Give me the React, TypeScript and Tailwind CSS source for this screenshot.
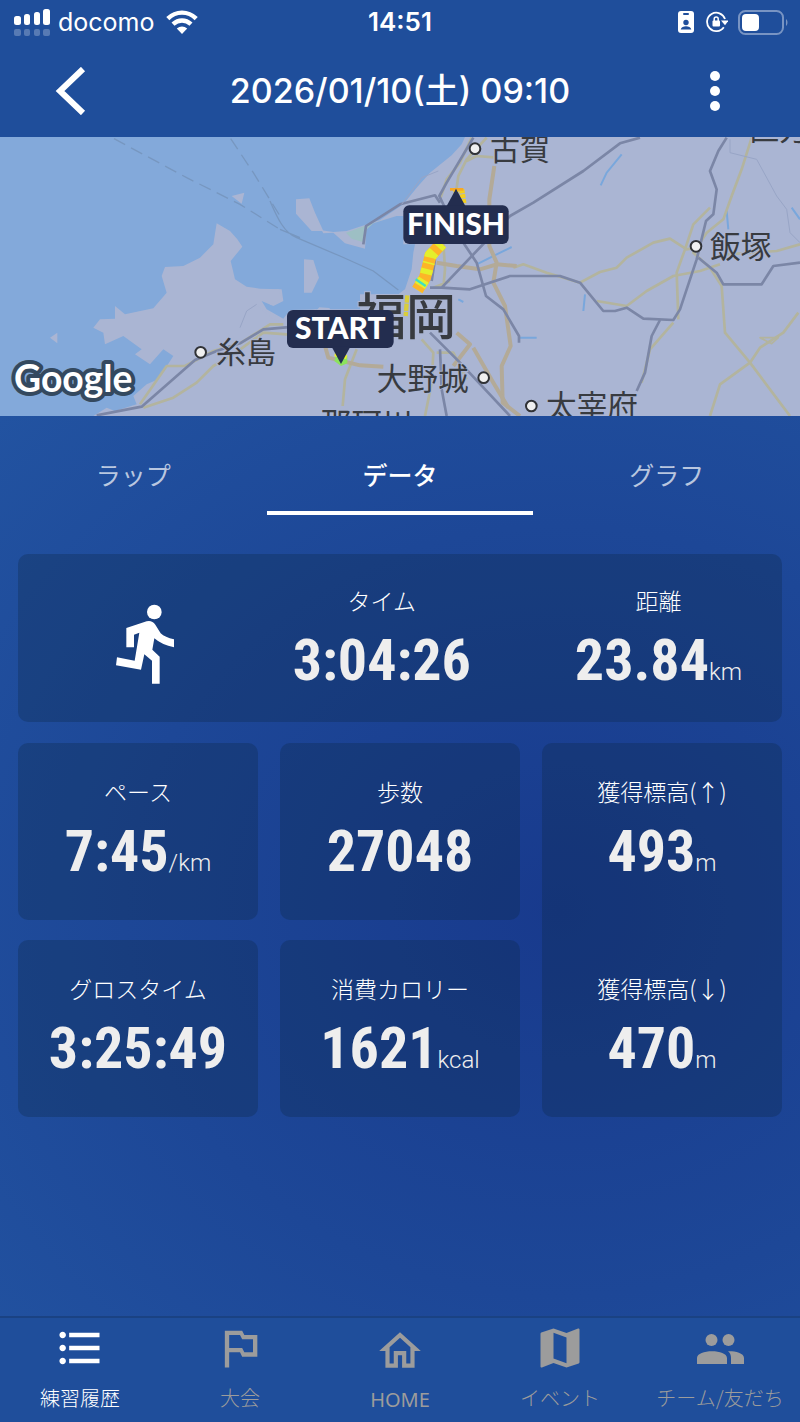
import React, { useState } from 'react';
import { MdFormatListBulleted, MdMap, MdOutlinedFlag, MdOutlineHome } from 'react-icons/md';

const PeopleIcon: React.FC = () => (
  <svg className="w-[52px] h-[52px]" viewBox="0 0 52 52" fill="currentColor">
    <circle cx="17.500" cy="18" r="6" />
    <circle cx="34.500" cy="18" r="6" />
    <path d="M3 42v-6c0-9 30-9 30 0v6zM37 42v-6c0-3-1-5-3-6.700 6-.3 16 1.400 16 6.700v6z" />
  </svg>
);

const TABS = ['ラップ', 'データ', 'グラフ'];

const NAV_ITEMS = [
  { name: '練習履歴', icon: <MdFormatListBulleted size={52} /> },
  { name: '大会', icon: <MdOutlinedFlag size={52} /> },
  { name: 'HOME', icon: <MdOutlineHome size={50} />, home: true },
  { name: 'イベント', icon: <MdMap size={52} /> },
  { name: 'チーム/友だち', icon: <PeopleIcon /> },
];

const StatusBar: React.FC = () => (
  <div className="grid grid-cols-3 items-center h-11 pl-3 pr-3 font-['Inter',sans-serif] leading-8">
    <div className="flex items-center gap-2">
      <svg className="w-[38px] h-7" viewBox="0 0 38 28" fill="currentColor">
        <rect x="2" y="8" width="7" height="9" rx="2.500" />
        <rect x="12" y="6" width="6" height="11" rx="2.500" />
        <rect x="22" y="4" width="6" height="13" rx="2.500" />
        <rect x="31" y="1" width="7" height="16" rx="2.500" />
        <g opacity=".25">
          <rect x="2" y="21" width="7" height="7" rx="2" />
          <rect x="12" y="21" width="6" height="7" rx="2" />
          <rect x="22" y="21" width="6" height="7" rx="2" />
          <rect x="31" y="21" width="7" height="7" rx="2" />
        </g>
      </svg>
      <span className="text-[25px]">docomo</span>
      <svg className="w-8 h-6 ml-1" viewBox="0 0 32 24" fill="none" stroke="currentColor" strokeWidth="4.400">
        <path d="M1.800 8.600C10 .6 22 .6 30.200 8.600" />
        <path d="M7 14.200c5.400-5 12.600-5 18 0" />
        <path d="M16 24l-5.200-5.400c3-2.700 7.400-2.700 10.400 0z" fill="currentColor" stroke="none" />
      </svg>
    </div>
    <time className="text-center text-[26px] font-semibold">14:51</time>
    <div className="flex items-center justify-end gap-3">
      <svg className="w-4 h-[22px]" viewBox="0 0 16 22">
        <rect width="16" height="22" rx="3" fill="#fff" />
        <g fill="#1f4e9b">
          <rect x="5" y="2" width="6" height="2" rx="1" />
          <circle cx="8" cy="11.500" r="2.700" />
          <path d="M2.700 18.500c1-4.200 9.600-4.200 10.600 0z" />
        </g>
      </svg>
      <svg className="w-[22px] h-[22px]" viewBox="0 0 22 22" fill="none" stroke="currentColor" strokeWidth="1.800">
        <path d="M17.800 16.200A9.200 9.200 0 1 1 19 8" />
        <path d="M15 9.500h7.500L19 14.200z" fill="currentColor" stroke="none" />
        <rect x="6.500" y="9.500" width="7.500" height="6" rx="1" fill="currentColor" stroke="none" />
        <path d="M8.200 10V8a2 2 0 0 1 4 0v2" strokeWidth="1.500" />
      </svg>
      <svg className="w-[52px] h-[26px] -ml-1" viewBox="0 0 52 26" fill="none">
        <rect x="3" y="2" width="44" height="23" rx="6.500" stroke="#fff" strokeOpacity=".4" strokeWidth="2" />
        <rect x="6" y="5" width="17" height="17" rx="4" fill="#fff" />
        <path d="M50 10c2 1.500 2 5.500 0 7z" fill="#fff" fillOpacity=".4" />
      </svg>
    </div>
  </div>
);

const Header: React.FC = () => (
  <header className="bg-[#1f4e9b] h-[137px]">
    <StatusBar />
    <div className="flex items-center justify-between px-[50px] h-[93px]">
      <button aria-label="戻る" className="w-[70px] h-12 flex items-center">
        <svg className="w-10 h-12" viewBox="0 0 40 48" fill="none" stroke="currentColor" strokeWidth="6">
          <path d="M33 2L10 24l23 22" />
        </svg>
      </button>
      <h1 className="text-[34px] leading-[44px] font-medium font-['Inter','Noto_Sans_CJK_JP',sans-serif]">2026/01/10(土) 09:10</h1>
      <button aria-label="メニュー" className="w-[70px] h-12 flex items-center justify-center">
        <svg className="w-3 h-10" viewBox="0 0 12 40" fill="currentColor">
          <circle cx="6" cy="5" r="5" />
          <circle cx="6" cy="20" r="5" />
          <circle cx="6" cy="35" r="5" />
        </svg>
      </button>
    </div>
  </header>
);

const RouteMap: React.FC = () => (
  <svg className="block w-full" viewBox="0 3 2400 837" role="img" aria-label="ルート">
    <rect y="3" width="2400" height="837" fill="#aab5d3" />
    <path
      fill="#83a9da"
      d="M0 3H1395L1385 25 1355 58 1290 110 1250 155 1210 205 1140 252 1040 285 1000 288 965 283 970 292 1000 290 1035 322 1095 338 1100 268 1190 240 1210 240V325H1245L1240 350 1235 400 1215 460 1195 475H1080V520L960 520 870 522 850 548 800 520 785 495 820 510 850 495 845 460 780 458 740 452 705 430 692 375 727 332 712 310 690 285 650 262 640 325 600 365 550 390 495 393 485 420 500 470 460 517 375 535 345 510 345 548 300 550 280 575 310 590 315 625 370 600 425 640 405 655 450 685 490 640 520 660 475 730 440 745 400 780 410 805 345 825 320 815 280 840H0z"
    />
    <g fill="#aab5d3">
      <path d="M695 180l38-10-8 33zM150 605l22-15v32zM888 190l40-3 17 43 25 55h-35l-47-52zM912 370l28 2 17 53-22 45h-23zM950 522l8-8 30 2 5 8zM810 462l25-2 10 25-35 22zM770 510l50 40 60 20 70-50-60 10-40 22z" />
    </g>
    <path d="M1038 290L1100 268 1195 236 1120 262 1095 285 1088 318 1055 308z" fill="#9dbfc4" />

    {/* ferry lines */}
    <g fill="none" stroke="#7797c0" strokeWidth="4" strokeDasharray="38 20">
      <path d="M342 8L560 125 720 205 840 280M692 8L760 110 840 240" />
    </g>
    <path d="M810 195C830 240 850 290 890 305L1020 360 1120 405 1195 462M840 280L900 305" fill="none" stroke="#7797c0" strokeWidth="4" />

    {/* rivers */}
    <g fill="none" stroke="#79a7dc" strokeWidth="6">
      <path d="M1865 55L1820 110 1802 148M1755 475l-5 50M2180 225l5 55M2375 215l25 35M1430 385l60-30 45-22M1560 605h50M1375 490l15 8" />
    </g>

    {/* minor roads */}
    <g fill="none" stroke="#b3b49e" strokeWidth="8" strokeLinejoin="round">
      <path d="M420 805L500 690H555L640 645 720 622 810 565H850M430 815L520 785 590 740 640 690 700 655 790 590 860 595 960 590" />
      <path d="M1415 5L1380 80 1340 130 1322 185M1460 5L1400 70 1375 120 1365 190" />
      <path d="M1400 75L1430 60 1490 65M1330 320L1335 400 1330 455M1300 455L1350 435M1540 395L1570 385 1640 410 1740 440 1800 408 1850 395 1880 365 1960 320 2010 308 2060 340 2090 335" />
      <path d="M2255 5L2225 100 2195 180 2170 250 2120 290 2080 350 2130 395 2165 450 2175 590 2250 680 2370 840M2130 215L2080 265 2055 340 2030 410 2035 550" />
      <path d="M1790 495L1880 510 1940 465 2020 420 2100 405 2160 385M2020 560L1950 640 1925 740M2180 355L2330 345 2400 325M2395 530L2350 590 2280 635 2250 680 2160 745 2130 840" />
      <path d="M2280 605h55l-20 18z" strokeWidth="5" />
      <path d="M1070 640L1035 730 1028 810M1265 610L1300 650 1295 740 1275 840M1310 650L1360 650 1400 730" />
    </g>

    {/* expressways */}
    <g fill="none" stroke="#b3aa98" strokeWidth="12" strokeLinejoin="round">
      <path d="M1483 90L1468 190 1468 330 1490 380 1480 440 1515 510 1532 630 1505 690 1508 800 1560 840M1310 380L1370 390 1440 400 1490 385 1550 390" />
      <path d="M975 630L985 665 1080 688 1150 692M1370 590L1410 625 1360 690M1420 635L1480 740 1525 815" />
    </g>

    {/* railways */}
    <g fill="none" stroke="#7b86a6" strokeWidth="8" strokeLinejoin="round">
      <path d="M290 838L425 812 585 672 650 645 720 622 790 580 960 565" />
      <path d="M1420 5L1340 140 1318 180 1370 290 1430 380 1458 480 1510 520 1557 600V620" />
      <path d="M1090 325L1098 270 1200 205 1305 178 1320 200" />
      <path d="M1290 455H1325L1530 240 1600 200 1750 105 1860 22 1920 5M1295 435L1305 370M1325 455L1410 460 1530 420H1680L1740 440 1810 525H1845L1880 515 1930 548 2020 552 2040 520 2090 370 2118 255 2140 235 2150 160 2130 105 2155 45 2180 5" />
      <path d="M2095 365L2150 410 2170 445H2285L2320 390 2400 380M1980 552L1955 600 1935 710 1910 765" />
      <path d="M1290 590L1380 680 1530 840M1320 640L1325 760 1340 840" />
    </g>
    <path d="M2190 10v40l80 20 60 110 30 40 10 70 30 30M720 575l20-50 30-20M1205 205l60-80 50-20" fill="none" stroke="#98a5c6" strokeWidth="3" />

    <g className="font-['Noto_Sans_CJK_JP',sans-serif]" fill="#383b40" stroke="#aab5d3" strokeWidth="6" paintOrder="stroke" fontSize="90">
      <text x="1470" y="71">古賀</text>
      <text x="648" y="682">糸島</text>
      <text x="1130" y="761" fontSize="92">大野城</text>
      <text x="1638" y="842" fontSize="92">太宰府</text>
      <text x="2130" y="367" fontSize="92">飯塚</text>
      <text x="2246" y="12" fontSize="92">直方</text>
      <text x="962" y="897" fontSize="92">那珂川</text>
      <text x="1068" y="596" fontSize="150" fontWeight="500">福岡</text>
    </g>
    <g fill="#f0f0f0" stroke="#303236" strokeWidth="6">
      <circle cx="602" cy="649" r="16" />
      <circle cx="1425" cy="38" r="16" />
      <circle cx="1451" cy="725" r="16" />
      <circle cx="1594" cy="810" r="16" />
      <circle cx="2088" cy="331" r="16" />
    </g>

    {/* run track, coloured by pace */}
    <g fill="none" strokeLinejoin="round">
      <path d="M1325 322L1292 358 1275 425 1252 462" stroke="#fdb528" strokeWidth="36" />
      <path d="M1325 322L1292 358 1275 425 1252 462" stroke="#e4f02c" strokeWidth="36" strokeDasharray="16 18 22 14 5 16" />
      <path d="M1247 430l30 20" stroke="#3fe0c0" strokeWidth="7" />
      <path d="M1222 478L1217 540" stroke="#d9cd3c" strokeWidth="13" strokeDasharray="22 3" />
      <path d="M1368 157V200M1385 160L1392 205" stroke="#f3cf20" strokeWidth="16" strokeDasharray="12 3" />
      <path d="M1350 160h40" stroke="#f7a824" strokeWidth="8" />
      <path d="M1003 675L1014 638 1042 660V682L1023 690z" fill="#8be35c" />
      <path d="M1004 655l36 8" stroke="#eef02a" strokeWidth="12" />
    </g>

    <g fill="#232d4f">
      <path d="M1368 158l28 52h-56z" />
      <rect x="1210" y="208" width="316" height="116" rx="18" />
      <rect x="861" y="522" width="320" height="114" rx="18" />
      <path d="M1023 684l-28-52h56z" />
    </g>
    <g className="font-['Lato',sans-serif]" fill="#fff" fontSize="90" fontWeight="900" textAnchor="middle">
      <text x="1368" y="296">FINISH</text>
      <text x="1021" y="610">START</text>
    </g>
    <text className="font-['Lato',sans-serif]" x="42" y="768" fontSize="112" fontWeight="700" fill="#fff" stroke="#34495f" strokeWidth="24" strokeLinejoin="round" paintOrder="stroke">Google</text>
  </svg>
);

const RunnerIcon: React.FC = () => (
  <svg className="w-[58px] h-20" viewBox="348 194 174 238" fill="currentColor">
    <circle cx="463" cy="217" r="22" />
    <path d="M379 265L440 245Q456 241 466 255L482 281Q495 293 522 299V323Q486 316 463 296L457 330 479 351V432H456V363L433 344 423 390 348 377 351 353 404 363 418 279 402 285V323H379z" />
  </svg>
);

interface MetricProps {
  label: string;
  value: string;
  unit?: string;
}

const Metric: React.FC<MetricProps> = ({ label, value, unit }) => (
  <dl className="flex flex-col items-center">
    <dt className="text-[23px] leading-8 font-light font-['Noto_Sans_CJK_JP',sans-serif]">{label}</dt>
    <dd className="mt-3 text-[#eeeeee] whitespace-nowrap">
      <span className="text-[58px] leading-[64px] font-bold font-['Roboto_Condensed','Roboto',sans-serif]">{value}</span>
      {unit && <span className="text-2xl font-light font-['Roboto',sans-serif]">{unit}</span>}
    </dd>
  </dl>
);

const CARD = 'rounded-[10px] bg-[#0e2746]/30';

const App: React.FC = () => {
  const [tab, setTab] = useState('データ');
  const [page, setPage] = useState('練習履歴');

  return (
    <div className="min-h-screen flex flex-col text-white bg-[#2152a0]">
      <Header />
      <RouteMap />
      <main className="flex-1 bg-[radial-gradient(ellipse_at_70%_55%,#183a8d_0%,#1d4797_55%,#2253a1_100%)]">
        <div role="tablist" className="grid grid-cols-3 font-['Noto_Sans_CJK_JP',sans-serif]">
          {TABS.map((name) => (
            <button key={name} role="tab" aria-selected={tab === name} onClick={() => setTab(name)} className={`h-[99px] pt-10 text-[25px] leading-9 border-b-4 flex items-start justify-center ${tab === name ? 'border-white font-medium' : 'border-transparent text-white/70'}`}>
              {name}
            </button>
          ))}
        </div>

        <div className="px-[18px] pt-[39px] pb-10">
          <section className={`${CARD} flex h-[168px]`}>
            <div className="w-1/3 flex items-center justify-center pt-3">
              <RunnerIcon />
            </div>
            <div className="flex-1 flex justify-between pt-[30px] pl-5 pr-10">
              <Metric label="タイム" value="3:04:26" />
              <Metric label="距離" value="23.84" unit="km" />
            </div>
          </section>
          <div className="mt-[21px] grid grid-cols-3 auto-rows-[177px] gap-x-[22px] gap-y-5">
            <section className={`${CARD} pt-8`}><Metric label="ペース" value="7:45" unit="/km" /></section>
            <section className={`${CARD} pt-8`}><Metric label="歩数" value="27048" /></section>
            <section className={`${CARD} row-span-2 grid grid-rows-2 gap-5`}>
              <div className="pt-8"><Metric label="獲得標高(↑)" value="493" unit="m" /></div>
              <div className="pt-8"><Metric label="獲得標高(↓)" value="470" unit="m" /></div>
            </section>
            <section className={`${CARD} pt-8`}><Metric label="グロスタイム" value="3:25:49" /></section>
            <section className={`${CARD} pt-8`}><Metric label="消費カロリー" value="1621" unit="kcal" /></section>
          </div>
        </div>
      </main>

      <nav className="grid grid-cols-5 h-[106px] bg-[#1f4e9b] border-t-2 border-[#1a4283]">
        {NAV_ITEMS.map((item) => (
          <button key={item.name} onClick={() => setPage(item.name)} className={`flex flex-col items-center ${item.home ? 'pt-2' : 'pt-1'} ${page === item.name ? 'text-white' : 'text-[#9c9c9c]'}`}>
            {item.icon}
            <span className={`leading-8 mt-2 text-xl whitespace-nowrap ${item.home ? "font-['Noto_Sans',sans-serif]" : "font-light font-['Noto_Sans_CJK_JP',sans-serif]"}`}>{item.name}</span>
          </button>
        ))}
      </nav>
    </div>
  );
};

export default App;
